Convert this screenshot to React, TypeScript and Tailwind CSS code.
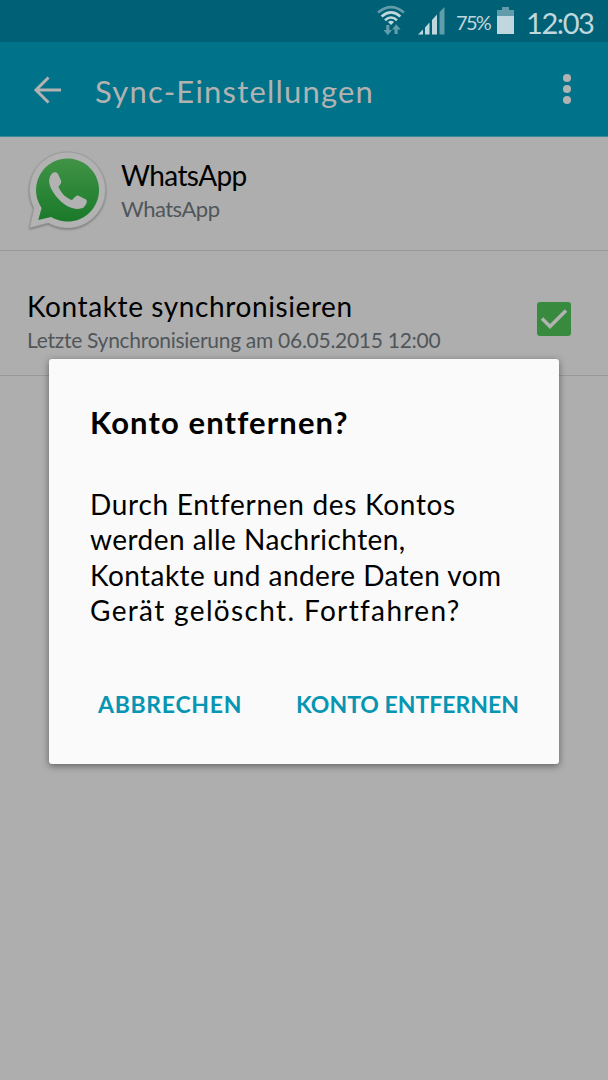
import type { ReactNode } from "react";

function StatusBar() {
  return (
    <div className="flex h-[42px] items-center bg-[#006075] pl-[377px] text-[#bfd7dd]">
      <svg width="28" height="32" viewBox="0 0 28 32" fill="none">
        <g stroke="currentColor" strokeWidth="2.6">
          <path d="M1 7.600 Q14 -3.400 27 7.600" opacity="0.5" />
          <path d="M4.600 11.400 Q14 3.200 23.400 11.400" />
          <path d="M8 15.200 Q14 9.800 20 15.200" />
        </g>
        <path d="M11 17 Q14 14.400 17 17 L14 20 Z" fill="currentColor" />
        <path
          d="M9.200 20h3.200v5h2.600l-4.200 5.200L6.500 25h2.700zM17.500 29h3.200v-4.500h3L19.200 19.300 15 24.500h2.500z"
          fill="currentColor"
          opacity="0.5"
        />
      </svg>
      <svg width="28" height="28" viewBox="0 0 28 28" fill="currentColor" className="ml-[13px]">
        <path d="M0 27.500 5 22.500V27.500zM7 20.500 11.500 15.500V27.500H7zM14 13 19 7.500V27.500h-5z" />
        <path d="M21.500 5 26.500 0V27.500h-5z" opacity="0.5" />
      </svg>
      <span className="ml-[10px] mt-[2px] w-[36px] whitespace-nowrap text-[20px] leading-6 tracking-[-1.7px]">75%</span>
      <svg width="17" height="27" viewBox="0 0 17 27" fill="currentColor" className="-mt-px ml-[5px]">
        <path d="M5 0h7v3h5v6H0V3h5z" opacity="0.5" />
        <path d="M0 9h17v18H0z" />
      </svg>
      <span className="ml-[12px] mt-[3px] whitespace-nowrap text-[29px] leading-8 tracking-[-1.4px]">12:03</span>
    </div>
  );
}

function Header() {
  return (
    <header className="flex h-[95px] items-center border-b border-[#3d8999] bg-[#007289] text-[#b2b2b2]">
      <svg
        width="28"
        height="28"
        viewBox="0 0 28 28"
        fill="none"
        stroke="currentColor"
        strokeWidth="3"
        className="ml-[33px] mt-px"
      >
        <path d="M28 14H3M15.500 1.500 3 14l12.500 12.500" />
      </svg>
      <h1 className="ml-[34px] mt-[3px] flex-1 whitespace-nowrap text-[31px] leading-10 tracking-[1.2px]">
        Sync-Einstellungen
      </h1>
      <button aria-label="Weitere Optionen" className="mr-[37px] flex flex-col gap-[3px]">
        <span className="size-2 rounded-full bg-[#b2b2b2]" />
        <span className="size-2 rounded-full bg-[#b2b2b2]" />
        <span className="size-2 rounded-full bg-[#b2b2b2]" />
      </button>
    </header>
  );
}

function WhatsAppLogo() {
  return (
    <svg width="80" height="80" viewBox="0 0 80 80" className="drop-shadow-[0_1px_1px_rgba(0,0,0,0.35)]">
      <defs>
        <linearGradient id="logo-green" x1="0" y1="0" x2="0" y2="1">
          <stop offset="0" stopColor="#419346" />
          <stop offset="1" stopColor="#197a29" />
        </linearGradient>
      </defs>
      <path
        d="M1.500 77 6 57.100A38 38 0 1 1 20.300 71.900Z"
        fill="#b2b2b2"
        stroke="#999"
        strokeWidth="0.7"
      />
      <path d="M10.300 69 13.600 56.900A31.500 31.500 0 1 1 23.100 65.900Z" fill="url(#logo-green)" />
      <path
        d="M24 22.500C26 20.500 29 21 30 23L33 29.500C34 32 31.500 34 30.500 36C34 43 38 47 44 49C46.500 46.500 48 44 50 44.500L58 48.500C60 50 58 54 55.500 56.500C49 60 39 57 31 48.500C22 39 18 29 24 22.500Z"
        fill="#b2b2b2"
      />
    </svg>
  );
}

function DialogButton({ className, children }: { className: string; children: ReactNode }) {
  return (
    <button className={`whitespace-nowrap text-[23px] font-bold leading-8 text-[#0695b2] ${className}`}>
      {children}
    </button>
  );
}

export default function App() {
  return (
    <div className="relative h-[1080px] w-[608px] overflow-hidden bg-[#aeaeae] font-['Lato','Open_Sans',sans-serif]">
      <StatusBar />
      <Header />

      <section className="flex h-[114px] border-b border-[#989898] pl-[28px] pt-[14px]">
        <WhatsAppLogo />
        <div className="ml-[13px] pt-[6px]">
          <div className="text-[28px] leading-9 tracking-[-0.6px] text-black">WhatsApp</div>
          <div className="text-[22px] leading-8 tracking-[-0.5px] text-[#50565a]">WhatsApp</div>
        </div>
      </section>

      <section className="flex h-[125px] border-b border-[#989898] pl-[27px] pr-[37px] pt-[37px]">
        <div className="flex-1">
          <div className="whitespace-nowrap text-[28px] leading-9 tracking-[0.6px] text-black">
            Kontakte synchronisieren
          </div>
          <div className="whitespace-nowrap text-[21px] leading-8 tracking-[-0.28px] text-[#50565a]">
            Letzte Synchronisierung am 06.05.2015 12:00
          </div>
        </div>
        <div className="mt-[14px] flex size-[34px] items-center justify-center rounded-[3px] bg-[#388b3e]">
          <svg width="28" height="22" viewBox="0 0 28 22" fill="none" stroke="#b2b2b2" strokeWidth="3.500">
            <path d="M2 10.500 10 18.500 26 2.500" />
          </svg>
        </div>
      </section>

      <div
        role="dialog"
        className="absolute left-[49px] top-[359px] flex h-[405px] w-[510px] flex-col rounded-[3px] bg-[#fafafa] px-[41px] shadow-[0_2px_7px_rgba(0,0,0,0.45)]"
      >
        <h2 className="mt-[43px] whitespace-nowrap text-[31px] font-bold leading-10 tracking-[1.1px] text-black">
          Konto entfernen?
        </h2>
        <p className="mt-[45px] whitespace-nowrap text-[28px] leading-[35.300px] text-black">
          <span className="tracking-[0.7px]">Durch Entfernen des Kontos</span>
          <br />
          <span className="tracking-[0.45px]">werden alle Nachrichten,</span>
          <br />
          <span className="tracking-[0.43px]">Kontakte und andere Daten vom</span>
          <br />
          <span className="tracking-[1.35px]">Gerät gelöscht. Fortfahren?</span>
        </p>
        <div className="-mr-px mt-[60px] flex justify-between pl-[8px]">
          <DialogButton className="tracking-[0.7px]">ABBRECHEN</DialogButton>
          <DialogButton className="tracking-normal">KONTO ENTFERNEN</DialogButton>
        </div>
      </div>
    </div>
  );
}
